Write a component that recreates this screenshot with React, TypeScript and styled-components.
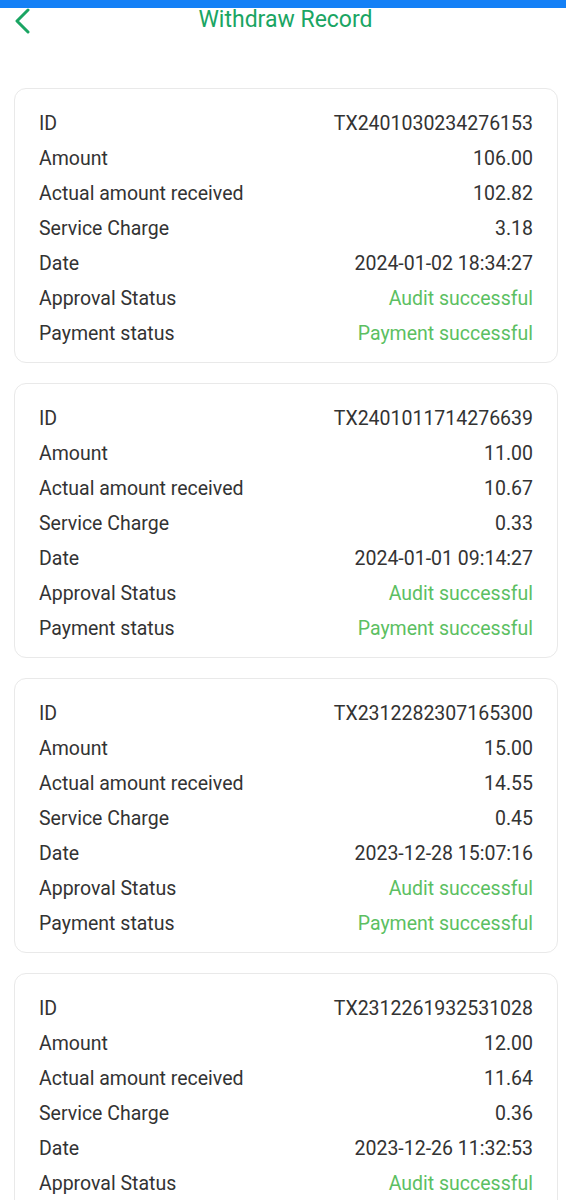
import styled, { createGlobalStyle } from 'styled-components';

const GlobalStyle = createGlobalStyle`
  body {
    margin: 0;
    background: #ffffff;
    font-family: Roboto, "Liberation Sans", sans-serif;
  }
`;

interface WithdrawRecord {
  id: string;
  amount: string;
  received: string;
  charge: string;
  date: string;
  approval: string;
  payment: string;
}

const records: WithdrawRecord[] = [
  {
    id: 'TX2401030234276153',
    amount: '106.00',
    received: '102.82',
    charge: '3.18',
    date: '2024-01-02 18:34:27',
    approval: 'Audit successful',
    payment: 'Payment successful',
  },
  {
    id: 'TX2401011714276639',
    amount: '11.00',
    received: '10.67',
    charge: '0.33',
    date: '2024-01-01 09:14:27',
    approval: 'Audit successful',
    payment: 'Payment successful',
  },
  {
    id: 'TX2312282307165300',
    amount: '15.00',
    received: '14.55',
    charge: '0.45',
    date: '2023-12-28 15:07:16',
    approval: 'Audit successful',
    payment: 'Payment successful',
  },
  {
    id: 'TX2312261932531028',
    amount: '12.00',
    received: '11.64',
    charge: '0.36',
    date: '2023-12-26 11:32:53',
    approval: 'Audit successful',
    payment: 'Payment successful',
  },
];

const Page = styled.div`
  width: 566px;
  min-height: 1200px;
  background: #ffffff;
`;

const StatusBar = styled.div`
  height: 8px;
  background: #1480f6;
`;

const Header = styled.header`
  position: relative;
  display: flex;
  align-items: center;
  justify-content: center;
  height: 24px;
  padding-left: 5px;
  margin-bottom: 56px;
`;

const BackButton = styled.button`
  position: absolute;
  left: 12px;
  top: 0;
  display: flex;
  align-items: center;
  padding: 0;
  border: none;
  background: none;
  cursor: pointer;
`;

const Title = styled.h1`
  margin: -1px 0 0;
  font-size: 23px;
  font-weight: 400;
  line-height: 24px;
  color: #1aa563;
`;

const List = styled.div`
  display: flex;
  flex-direction: column;
  gap: 20px;
  padding: 0 8px 20px 14px;
`;

const Card = styled.div`
  display: flex;
  flex-direction: column;
  padding: 17px 24px 11px;
  border: 1px solid #e9e9e9;
  border-radius: 12px;
  background: #ffffff;
`;

const Row = styled.div`
  display: flex;
  justify-content: space-between;
  align-items: center;
  height: 35px;
  font-size: 19.5px;
  color: #333333;
`;

const Value = styled.span<{ $success?: boolean }>`
  color: ${({ $success }) => ($success ? '#5cbf62' : '#333333')};
`;

export default function App() {
  return (
    <Page>
      <GlobalStyle />
      <StatusBar />
      <Header>
        <BackButton aria-label="back">
          <svg width="20" height="26" viewBox="0 0 20 26" fill="none">
            <path
              d="M16 2 L5 13 L16 24"
              stroke="#1aa563"
              strokeWidth="3"
              strokeLinecap="round"
              strokeLinejoin="round"
            />
          </svg>
        </BackButton>
        <Title>Withdraw Record</Title>
      </Header>
      <List>
        {records.map((r) => (
          <Card key={r.id}>
            <Row>
              <span>ID</span>
              <Value>{r.id}</Value>
            </Row>
            <Row>
              <span>Amount</span>
              <Value>{r.amount}</Value>
            </Row>
            <Row>
              <span>Actual amount received</span>
              <Value>{r.received}</Value>
            </Row>
            <Row>
              <span>Service Charge</span>
              <Value>{r.charge}</Value>
            </Row>
            <Row>
              <span>Date</span>
              <Value>{r.date}</Value>
            </Row>
            <Row>
              <span>Approval Status</span>
              <Value $success>{r.approval}</Value>
            </Row>
            <Row>
              <span>Payment status</span>
              <Value $success>{r.payment}</Value>
            </Row>
          </Card>
        ))}
      </List>
    </Page>
  );
}
